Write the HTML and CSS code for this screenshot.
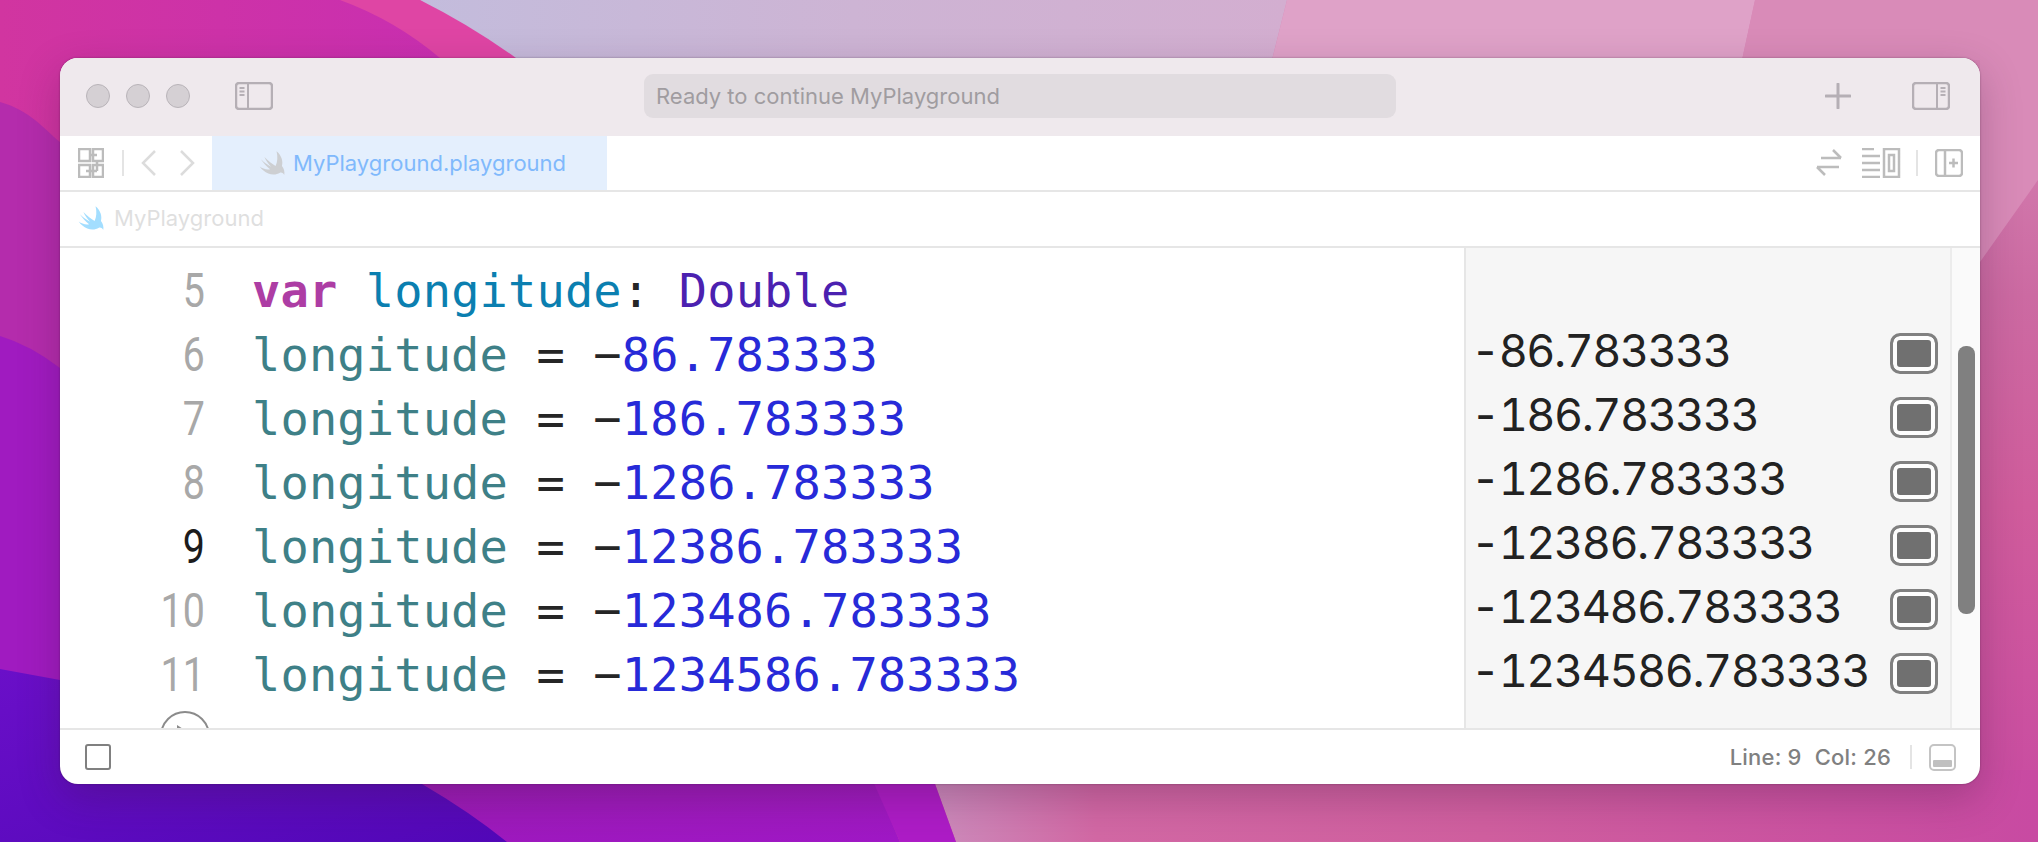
FILE: index.html
```html
<!DOCTYPE html>
<html lang="en">
<head>
<meta charset="utf-8">
<title>MyPlayground</title>
<link rel="stylesheet" href="styles.css">
</head>
<body>
<svg class="wallpaper" viewBox="0 0 2038 842" preserveAspectRatio="none" aria-hidden="true">
  <defs>
    <linearGradient id="gPale" x1="0" y1="0" x2="1" y2="0"><stop offset="0" stop-color="#c3bcdc"/><stop offset=".5" stop-color="#cdb4d4"/><stop offset="1" stop-color="#d3aed0"/></linearGradient>
    <linearGradient id="gPink" x1="0" y1="0" x2="0" y2="1"><stop offset="0" stop-color="#d88ab8"/><stop offset=".35" stop-color="#cc6aa2"/><stop offset=".6" stop-color="#d05c9c"/><stop offset="1" stop-color="#c84aa2"/></linearGradient>
    <linearGradient id="gMag" x1="0" y1="0" x2="1" y2="0"><stop offset="0" stop-color="#d135a0"/><stop offset="1" stop-color="#c92fb0"/></linearGradient>
    <linearGradient id="gViolet" x1="0" y1="0" x2="1" y2="1"><stop offset="0" stop-color="#6a0fc8"/><stop offset="1" stop-color="#5208b8"/></linearGradient>
    <linearGradient id="gMid" x1="0" y1="0" x2="1" y2="1"><stop offset="0" stop-color="#9a1cb0"/><stop offset="1" stop-color="#a018c6"/></linearGradient>
    <linearGradient id="gBottom" x1="0" y1="0" x2="1" y2="0"><stop offset="0" stop-color="#cc8cbc"/><stop offset=".15" stop-color="#d268a4"/><stop offset=".5" stop-color="#d05f9f"/><stop offset="1" stop-color="#c84aa2"/></linearGradient>
  </defs>
  <rect width="2038" height="842" fill="url(#gPink)"/>
  <path d="M420 0H1287L1272 60H516z" fill="url(#gPale)"/>
  <path d="M1287 0H1755L1742 60H1272z" fill="#dfa2c8"/>
  <path d="M1755 0H2038V180L1980 262V60H1742z" fill="#d98bb8"/>
  <path d="M930 770L956 842H2038V770z" fill="url(#gBottom)"/>
  <path d="M0 0H420Q470 25 516 58V770H0z" fill="#df45a4"/>
  <path d="M0 0H340Q395 20 440 58V770H0z" fill="url(#gMag)"/>
  <path d="M0 102C30 110 45 130 60 142V770H0z" fill="#b42cac"/>
  <path d="M0 336Q30 345 60 368V770H0z" fill="#a01bc0"/>
  <path d="M300 770H870L900 842H400z" fill="url(#gMid)"/>
  <path d="M868 770H930L956 842H900z" fill="#ad1cc6"/>
  <path d="M0 669L60 680H380L422 784Q470 812 507 842H0z" fill="url(#gViolet)"/>
</svg>

<main class="window">
  <header class="titlebar">
    <div class="lights"><span class="light"></span><span class="light"></span><span class="light"></span></div>
    <svg class="ic-panel" viewBox="0 0 38 28" aria-hidden="true"><rect x="1" y="1" width="36" height="26" rx="3"/><path d="M13 1v26M4.500 6h5M4.500 9.500h5M4.500 13h5"/></svg>
    <div class="address">Ready to continue MyPlayground</div>
    <svg class="ic-plus" viewBox="0 0 26 26" aria-hidden="true"><path d="M13 1v24M1 13h24"/></svg>
    <svg class="ic-panel ic-panel-right" viewBox="0 0 38 28" aria-hidden="true"><rect x="1" y="1" width="36" height="26" rx="3"/><path d="M25 1v26M28.500 6h5M28.500 9.500h5M28.500 13h5"/></svg>
  </header>

  <nav class="tabbar">
    <svg class="ic-line ic-grid" viewBox="0 0 26 30" aria-hidden="true"><path d="M1 1h11v12H1zM15 1h10v12H15zM1 17h11v12H1zM15 17h10v12H15zM12 7h7M19 23H8M19 13v10"/></svg>
    <span class="vsep vsep-nav"></span>
    <svg class="ic-chev" viewBox="0 0 16 26" aria-hidden="true"><path d="M14 1L2 13l12 12"/></svg>
    <svg class="ic-chev ic-chev-next" viewBox="0 0 16 26" aria-hidden="true"><path d="M2 1l12 12L2 25"/></svg>
    <div class="tab">
      <svg class="swift swift-gray" viewBox="2 1 20 20" aria-hidden="true"><path d="M15 2c3.600 3 5 7.300 4 10.800 1.500 2 2.200 4.300 1.700 6.700-.5-1.200-1.600-2-3.200-1.700-2.300 1.500-5.700 1.800-8.600.6-2.600-1-4.900-3-6.400-5.200 2.100 1.500 5 2.600 7.700 2C7.600 13 5 10.300 3.400 7.800 5.700 10 8.500 12 11 13.400 8.900 11.300 7 8.500 6 6.200c2.800 2.800 5.800 5.200 8.300 6.700C15.700 10 16 6 15 2z"/></svg>
      <span class="tab-name">MyPlayground.playground</span>
    </div>
    <div class="spacer"></div>
    <svg class="ic-line ic-swap" viewBox="0 0 28 28" aria-hidden="true"><path d="M6 9h20M18 1l8 8M24 18H2M10 26l-8-8"/></svg>
    <svg class="ic-line ic-lines" viewBox="0 0 40 30" aria-hidden="true"><path d="M1 1h12M1 8h18M1 15h18M1 22h18M1 29h18M23 1h15v28H23zM28 7h5v16h-5z"/></svg>
    <span class="vsep vsep-tools"></span>
    <svg class="ic-line ic-addpanel" viewBox="0 0 28 28" aria-hidden="true"><rect x="1" y="1" width="26" height="26" rx="3"/><path d="M10 1v26M14 14h9M18.500 9.500v9"/></svg>
  </nav>

  <div class="pathbar">
    <svg class="swift swift-blue" viewBox="2 1 20 20" aria-hidden="true"><path d="M15 2c3.600 3 5 7.300 4 10.800 1.500 2 2.200 4.300 1.700 6.700-.5-1.200-1.600-2-3.200-1.700-2.300 1.500-5.700 1.800-8.600.6-2.600-1-4.900-3-6.400-5.200 2.100 1.500 5 2.600 7.700 2C7.600 13 5 10.300 3.400 7.800 5.700 10 8.500 12 11 13.400 8.900 11.300 7 8.500 6 6.200c2.800 2.800 5.800 5.200 8.300 6.700C15.700 10 16 6 15 2z"/></svg>
    <span class="path-name">MyPlayground</span>
  </div>

  <section class="editor">
    <div class="code">
      <div class="row"><span class="num">5</span><code><b class="kw">var</b> <span class="decl">longitude</span>: <span class="type">Double</span></code></div>
      <div class="row"><span class="num">6</span><code><span class="ident">longitude</span> = −<span class="lit">86.783333</span></code></div>
      <div class="row"><span class="num">7</span><code><span class="ident">longitude</span> = −<span class="lit">186.783333</span></code></div>
      <div class="row"><span class="num">8</span><code><span class="ident">longitude</span> = −<span class="lit">1286.783333</span></code></div>
      <div class="row"><span class="num num-current">9</span><code><span class="ident">longitude</span> = −<span class="lit">12386.783333</span></code></div>
      <div class="row"><span class="num">10</span><code><span class="ident">longitude</span> = −<span class="lit">123486.783333</span></code></div>
      <div class="row"><span class="num">11</span><code><span class="ident">longitude</span> = −<span class="lit">1234586.783333</span></code></div>
      <span class="run-circle"></span>
    </div>
    <aside class="results">
      <div class="result result-empty"></div>
      <div class="result"><span>-86.783333</span><i class="quicklook"></i></div>
      <div class="result"><span>-186.783333</span><i class="quicklook"></i></div>
      <div class="result"><span>-1286.783333</span><i class="quicklook"></i></div>
      <div class="result"><span>-12386.783333</span><i class="quicklook"></i></div>
      <div class="result"><span>-123486.783333</span><i class="quicklook"></i></div>
      <div class="result"><span>-1234586.783333</span><i class="quicklook"></i></div>
    </aside>
    <div class="scroller"><div class="thumb"></div></div>
  </section>

  <footer class="statusbar">
    <span class="checkbox"></span>
    <div class="spacer"></div>
    <span class="position">Line: 9</span>
    <span class="position position-col">Col: 26</span>
    <span class="vsep vsep-status"></span>
    <span class="console-toggle"><i></i></span>
  </footer>
</main>
</body>
</html>
```

FILE: styles.css
```css
* { box-sizing: border-box; }
html, body { margin: 0; height: 100%; }
body {
  width: 2038px;
  height: 842px;
  overflow: hidden;
  padding: 58px 58px 58px 60px;
  position: relative;
  font-family: Inter, "Liberation Sans", sans-serif;
  background: #c84aa2;
}
.wallpaper { position: absolute; inset: 0; width: 2038px; height: 842px; display: block; }

.window {
  position: relative;
  width: 1920px;
  height: 726px;
  border-radius: 18px;
  overflow: hidden;
  background: #fff;
  display: flex;
  flex-direction: column;
  box-shadow: 0 14px 40px rgba(60, 20, 60, .28), 0 0 2px rgba(40, 20, 40, .45);
}

.titlebar {
  height: 78px;
  flex: none;
  background: #efe9ed;
  display: flex;
  align-items: center;
  padding: 0 0 2px 26px;
}
.lights { display: flex; gap: 16px; }
.light { width: 24px; height: 24px; border-radius: 50%; background: #d5d0d4; border: 1px solid #b9b4b9; }
.ic-panel { width: 38px; height: 28px; margin-left: 45px; fill: none; stroke: #b5afb5; stroke-width: 2.500; }
.ic-panel path { stroke-width: 2; }
.address {
  width: 752px;
  height: 44px;
  margin-left: 371px;
  padding-left: 12px;
  border-radius: 9px;
  background: #e1dce0;
  color: #a09ca0;
  font-size: 22px;
  line-height: 44px;
}
.ic-plus { width: 26px; height: 26px; margin-left: 429px; fill: none; stroke: #b5afb5; stroke-width: 3; stroke-linecap: round; }
.ic-panel-right { margin-left: 61px; }

.tabbar {
  height: 56px;
  flex: none;
  display: flex;
  align-items: center;
  border-bottom: 2px solid #e6e6e6;
  padding-left: 18px;
}
.ic-line { fill: none; stroke: #bcbcbc; stroke-width: 2.500; flex: none; }
.ic-grid { width: 26px; height: 30px; }
.vsep { width: 2px; background: #e4e4e4; flex: none; }
.vsep-nav { height: 26px; margin-left: 18px; }
.ic-chev { width: 16px; height: 26px; fill: none; stroke: #dcdcdc; stroke-width: 2.500; margin-left: 17px; flex: none; }
.ic-chev-next { margin-left: 22px; }
.tab {
  width: 395px;
  height: 54px;
  margin-left: 17px;
  background: #e4effd;
  display: flex;
  align-items: center;
  padding-left: 47px;
  flex: none;
}
.swift { width: 27px; height: 27px; flex: none; }
.swift-gray { fill: #cdcfd2; }
.swift-blue { fill: #a3deff; }
.tab-name { margin-left: 7px; color: #80b9fc; font-size: 22px; }
.spacer { flex: 1; }
.ic-swap { width: 28px; height: 28px; }
.ic-lines { width: 40px; height: 30px; margin-left: 18px; }
.vsep-tools { height: 26px; margin-left: 15px; }
.ic-addpanel { width: 28px; height: 28px; margin-left: 17px; margin-right: 17px; }

.pathbar {
  height: 56px;
  flex: none;
  display: flex;
  align-items: center;
  border-bottom: 2px solid #e6e6e6;
  padding: 0 0 2px 18px;
}
.path-name { margin-left: 9px; color: #dfdfdf; font-size: 22px; }

.editor {
  height: 480px;
  flex: none;
  display: flex;
  overflow: hidden;
}
.code {
  width: 1404px;
  flex: none;
  padding-top: 10px;
  position: relative;
  overflow: hidden;
}
.row {
  height: 64px;
  display: flex;
  align-items: center;
  font-family: "DejaVu Sans Mono", "Liberation Mono", monospace;
  font-size: 47px;
  letter-spacing: .15px;
  color: #262626;
}
.row code { font: inherit; margin-left: 47px; white-space: pre; }
.num {
  width: 145px;
  text-align: right;
  color: #a8a8a8;
  flex: none;
  font-family: Roboto, sans-serif;
  font-size: 48px;
  font-variant-numeric: tabular-nums;
  transform: scaleX(.82);
  transform-origin: right center;
}
.num-current { color: #1c1c1c; }
.kw { color: #ad3da4; font-weight: bold; }
.decl { color: #0b7fb0; }
.type { color: #4b21b0; }
.ident { color: #3e8087; }
.lit { color: #272ad8; }
.run-circle {
  position: absolute;
  left: 100px;
  top: 463px;
  width: 50px;
  height: 50px;
  border: 2px solid #8b8b8b;
  border-radius: 50%;
}
.run-circle::after {
  content: "";
  position: absolute;
  left: 15px;
  top: 12px;
  border-top: 13px solid transparent;
  border-bottom: 13px solid transparent;
  border-left: 20px solid #8b8b8b;
}

.results {
  width: 488px;
  flex: none;
  background: #f6f6f6;
  border-left: 2px solid #e6e6e6;
  border-right: 2px solid #ececec;
  padding: 6px 0 0 5px;
}
.result {
  height: 64px;
  display: flex;
  align-items: center;
  justify-content: space-between;
  padding-right: 12px;
  font-size: 45px;
  font-variant-numeric: tabular-nums;
  letter-spacing: -1.5px;
  color: #222;
}
.result-empty { height: 64px; }
.quicklook {
  width: 48px;
  height: 41px;
  border: 3px solid #808080;
  border-radius: 10px;
  background: #707070;
  box-shadow: inset 0 0 0 4px #fdfdfd;
  flex: none;
  margin-top: 7px;
}

.scroller { flex: 1; background: #fafafa; padding: 98px 5px 0 6px; }
.thumb { height: 268px; border-radius: 8px; background: #808080; }

.statusbar {
  flex: 1;
  display: flex;
  align-items: center;
  border-top: 2px solid #e6e6e6;
  padding: 0 24px 0 25px;
}
.checkbox { width: 26px; height: 26px; border: 2px solid #808080; border-radius: 3px; flex: none; }
.position { color: #808080; font-size: 22px; font-weight: 500; letter-spacing: .2px; }
.position-col { margin-left: 13px; }
.vsep-status { height: 24px; margin-left: 19px; }
.console-toggle {
  width: 27px;
  height: 27px;
  margin-left: 17px;
  border: 2px solid #c4c4c4;
  border-radius: 5px;
  display: flex;
  align-items: flex-end;
  padding: 0 2px 2px;
  flex: none;
}
.console-toggle i { display: block; width: 100%; height: 7px; border-radius: 1px; background: #c0c0c0; }
```
